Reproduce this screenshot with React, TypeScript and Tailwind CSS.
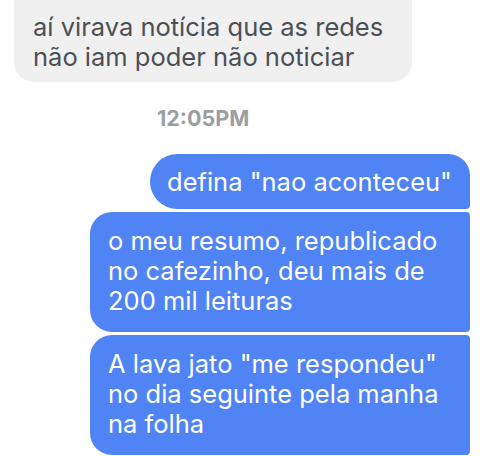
import React from "react";

const font = { fontFamily: "Inter, 'Liberation Sans', sans-serif" };

export default function App() {
  return (
    <div className="w-[486px] h-[456px] overflow-hidden bg-white" style={font}>
      {/* incoming */}
      <div className="pl-[14px] -mt-[24px]">
        <div className="inline-block w-[398px] bg-[#f0f0f0] rounded-[20px] pl-[19px] pr-4 pt-[36px] pb-[10px] text-[25.5px] leading-[30px] text-[#4b4f56]">
          aí virava notícia que as redes
          <br />
          não iam poder não noticiar
        </div>
      </div>

      {/* timestamp */}
      <div className="mt-[24px] pl-[157px] text-[21.5px] leading-[24px] font-bold text-[#9b9ea3]">
        12:05PM
      </div>

      {/* outgoing */}
      <div className="mt-[24px] flex flex-col items-end gap-[3px] pr-[16px]">
        <div className="bg-[#5084f5] text-white text-[25.5px] leading-[30px] pl-[17px] pr-[18px] pt-[13px] pb-[12px] rounded-tl-[28px] rounded-bl-[28px] rounded-tr-[22px] rounded-br-[4px]">
          defina "nao aconteceu"
        </div>
        <div className="w-[380px] bg-[#5084f5] text-white text-[25.5px] leading-[30px] pl-[18px] pr-4 pt-[14px] pb-[16px] rounded-l-[22px] rounded-r-[4px]">
          o meu resumo, republicado
          <br />
          no cafezinho, deu mais de
          <br />
          200 mil leituras
        </div>
        <div className="w-[380px] bg-[#5084f5] text-white text-[25.5px] leading-[30px] pl-[18px] pr-4 pt-[14px] pb-[16px] rounded-l-[22px] rounded-r-[4px]">
          A lava jato "me respondeu"
          <br />
          no dia seguinte pela manha
          <br />
          na folha
        </div>
      </div>
    </div>
  );
}
